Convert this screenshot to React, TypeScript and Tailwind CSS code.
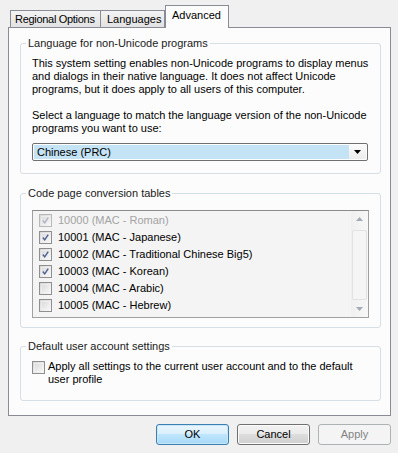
import React from 'react'

const codePages = [
  { label: '10000 (MAC - Roman)', checked: true, disabled: true },
  { label: '10001 (MAC - Japanese)', checked: true },
  { label: '10002 (MAC - Traditional Chinese Big5)', checked: true },
  { label: '10003 (MAC - Korean)', checked: true },
  { label: '10004 (MAC - Arabic)', checked: false },
  { label: '10005 (MAC - Hebrew)', checked: false },
]

function CheckBox({ checked, disabled }: { checked?: boolean; disabled?: boolean }) {
  return (
    <span
      className={`flex h-[13px] w-[13px] shrink-0 items-center justify-center border ${
        disabled ? 'border-[#b8b8b8]' : 'border-[#8f8f8f]'
      } bg-gradient-to-br from-[#d6d6d6] to-[#fafafa] p-[1px]`}
    >
      <span className="flex h-full w-full items-center justify-center border border-[#f4f4f4]/60">
        {checked && (
          <svg width="9" height="9" viewBox="0 0 9 9">
            <path
              d="M1 4.5 L3.5 7.5 L8 0.8"
              fill="none"
              stroke={disabled ? '#a9b3c4' : '#4c5f8e'}
              strokeWidth="1.8"
            />
          </svg>
        )}
      </span>
    </span>
  )
}

function Tab({ label, active, className }: { label: string; active?: boolean; className: string }) {
  if (active) {
    return (
      <div
        className={`relative z-10 -mb-px flex h-[23px] items-start whitespace-nowrap border border-b-0 border-[#898c95] bg-[#fcfcfc] pt-[3px] ${className}`}
      >
        {label}
      </div>
    )
  }
  return (
    <div
      className={`flex h-[17px] items-center whitespace-nowrap border-t border-[#898c95] bg-gradient-to-b from-[#f3f3f3] to-[#e2e2e2] ${className}`}
    >
      {label}
    </div>
  )
}

export default function App() {
  return (
    <div
      className="h-[453px] w-[398px] overflow-hidden bg-[#f0f0f0] pt-[5px] text-[11px] leading-[13px] text-black"
      style={{ fontFamily: '"Liberation Sans", Arial, sans-serif' }}
    >
      {/* tabs */}
      <div className="flex h-[22px] items-end pl-[10px]">
        <Tab label="Regional Options" className="w-[91px] border-x pl-[4px] tracking-[-0.3px]" />
        <Tab label="Languages" className="w-[64px] border-r pl-[6px]" />
        <Tab label="Advanced" active className="w-[64px] pl-[6px]" />
      </div>

      {/* tab page */}
      <div className="ml-[8px] h-[389px] w-[383px] border border-[#898c95] bg-[#fcfcfc] pl-[11px]">
        <fieldset className="mt-[9px] w-[361px] rounded-[3px] border border-[#d5dfe5] px-[11px] pb-[12px]">
          <legend className="-ml-[6px] px-[2px] text-[#1a1a1a]">Language for non-Unicode programs</legend>
          <p className="pt-[7px]">
            This system setting enables non-Unicode programs to display menus
            <br />
            and dialogs in their native language. It does not affect Unicode
            <br />
            programs, but it does apply to all users of this computer.
          </p>
          <p className="mt-[13px]">
            Select a language to match the language version of the non-Unicode
            <br />
            programs you want to use:
          </p>
          <div className="mt-[8px] flex h-[18px] w-[336px] rounded-[2px] border border-[#6f6f6f] bg-white p-px">
            <div className="flex flex-1 items-center bg-[#c4e3f5] pl-[3px]">Chinese (PRC)</div>
            <div className="flex w-[17px] items-center justify-center bg-gradient-to-b from-[#fafafa] to-[#ececec]">
              <svg width="7" height="4" viewBox="0 0 7 4">
                <path d="M0 0 H7 L3.5 4 Z" fill="#000" />
              </svg>
            </div>
          </div>
        </fieldset>

        <fieldset className="mt-[13px] w-[361px] rounded-[3px] border border-[#d5dfe5] px-[11px] pb-[9px]">
          <legend className="-ml-[6px] px-[2px] text-[#1a1a1a]">Code page conversion tables</legend>
          <div className="mt-[10px] flex h-[108px] w-[337px] border border-[#a0a0a0] border-t-[#8a8a8a] bg-[#f4f4f4]">
            <div className="flex flex-1 flex-col pt-px">
              {codePages.map((cp) => (
                <div key={cp.label} className="flex h-[17px] items-center pl-[6px]">
                  <CheckBox checked={cp.checked} disabled={cp.disabled} />
                  <span className={`ml-[6px] ${cp.disabled ? 'text-[#a3a3a3]' : ''}`}>{cp.label}</span>
                </div>
              ))}
            </div>
            <div className="flex w-[17px] flex-col items-center bg-gradient-to-r from-[#f0f0f0] to-[#f7f7f7]">
              <div className="flex h-[17px] items-center">
                <svg width="7" height="4" viewBox="0 0 7 4">
                  <path d="M0 4 H7 L3.5 0 Z" fill="#a3abb6" />
                </svg>
              </div>
              <div className="mt-[2px] h-[72px] w-[15px] rounded-[2px] border border-[#e2e2e2] bg-[#f5f5f5]" />
              <div className="mt-auto flex h-[17px] items-center">
                <svg width="7" height="4" viewBox="0 0 7 4">
                  <path d="M0 0 H7 L3.5 4 Z" fill="#a3abb6" />
                </svg>
              </div>
            </div>
          </div>
        </fieldset>

        <fieldset className="mt-[12px] w-[361px] rounded-[3px] border border-[#d5dfe5] px-[11px] pb-[14px]">
          <legend className="-ml-[6px] px-[2px] text-[#1a1a1a]">Default user account settings</legend>
          <div className="flex items-start pt-[7px]">
            <div className="mt-[1px]">
              <CheckBox />
            </div>
            <span className="ml-[3px]">
              Apply all settings to the current user account and to the default
              <br />
              user profile
            </span>
          </div>
        </fieldset>
      </div>

      {/* buttons */}
      <div className="mt-[8px] flex justify-end gap-[8px] pr-[7px]">
        <button className="flex h-[21px] w-[73px] items-center justify-center rounded-[3px] border border-[#3c7fb1] bg-[linear-gradient(to_bottom,#eaf6fd_0%,#d9f0fc_45%,#bee6fd_50%,#a7d9f5_100%)] shadow-[inset_0_0_0_1px_#c8e6f8]">
          OK
        </button>
        <button className="flex h-[21px] w-[73px] items-center justify-center rounded-[3px] border border-[#707070] bg-[linear-gradient(to_bottom,#f2f2f2_0%,#ebebeb_45%,#dddddd_50%,#cfcfcf_100%)] shadow-[inset_0_0_0_1px_#fbfbfb]">
          Cancel
        </button>
        <button className="flex h-[21px] w-[73px] items-center justify-center rounded-[3px] border border-[#adb2b5] bg-[#f4f4f4] text-[#838383]">
          Apply
        </button>
      </div>
    </div>
  )
}
